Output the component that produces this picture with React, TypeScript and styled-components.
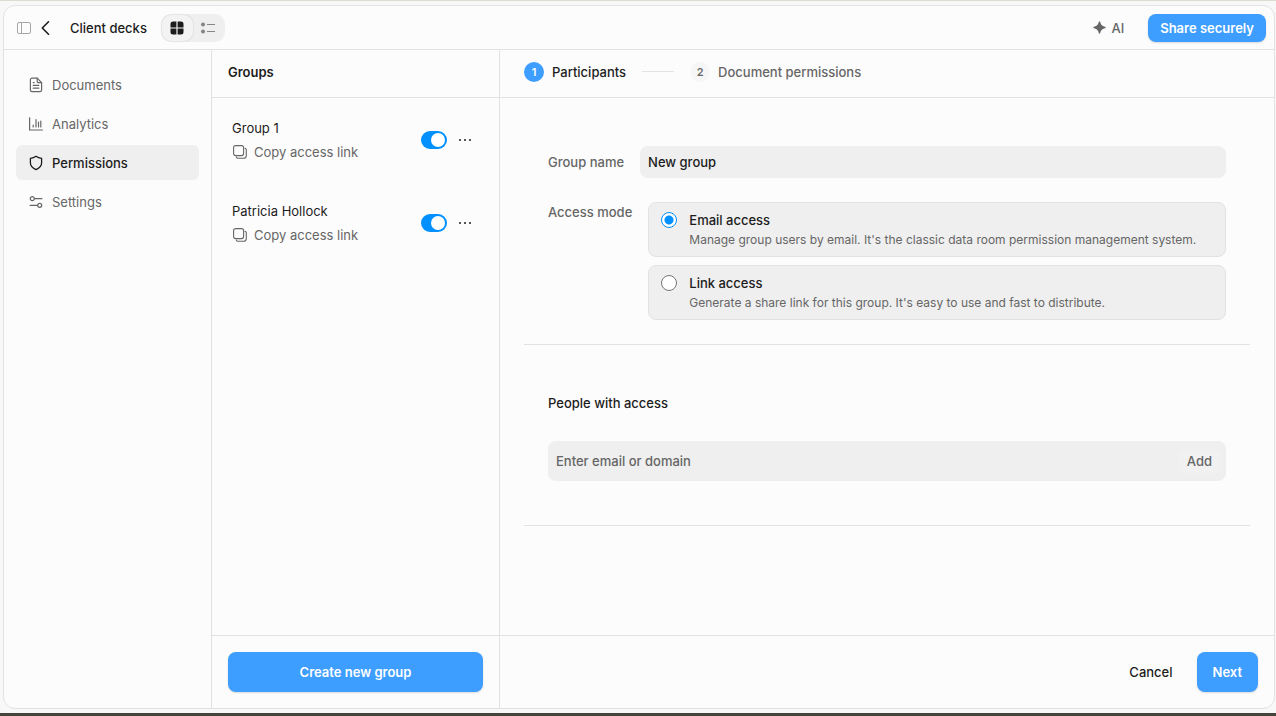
import React from "react";
import styled, { createGlobalStyle } from "styled-components";

const color = {
  text: "#1c1c1c",
  muted: "#666666",
  line: "#e2e2e2",
  surface: "#fcfcfc",
  fill: "#efefef",
  primary: "#3d9eff",
  accent: "#0090ff",
};

const GlobalStyle = createGlobalStyle`
  *, *::before, *::after { box-sizing: border-box; }
  body {
    margin: 0;
    background: #f8f8f8;
    color: ${color.text};
    font-family: Inter, "Liberation Sans", sans-serif;
    font-size: 13px;
    line-height: 20px;
    -webkit-font-smoothing: antialiased;
  }
  button, input { font: inherit; color: inherit; }
  button { border: 0; padding: 0; background: none; cursor: pointer; }
  h1, h2, p, ul, ol { margin: 0; padding: 0; font: inherit; list-style: none; }
  svg { display: block; flex: none; }
`;

const Screen = styled.div`
  min-height: 100vh;
  display: flex;
  padding: 4px 1px 4px 3px;
  border-top: 1px solid #dcdcd4;
  border-bottom: 3px solid #45443a;
`;

const Window = styled.div`
  flex: 1;
  display: flex;
  flex-direction: column;
  min-width: 0;
  background: ${color.surface};
  border: 1px solid ${color.line};
  border-radius: 12px;
  overflow: hidden;
`;

const TopBar = styled.header`
  display: flex;
  align-items: center;
  height: 44px;
  padding: 0 8px 0 12px;
  border-bottom: 1px solid ${color.line};
`;

const IconButton = styled.button<{ $tone?: string }>`
  display: flex;
  align-items: center;
  justify-content: center;
  height: 20px;
  color: ${(p) => p.$tone ?? color.text};
`;

const BackButton = styled(IconButton)`
  margin-left: 8px;
`;

const Title = styled.h1`
  margin-left: 20px;
  font-weight: 500;
`;

const ViewSwitch = styled.div`
  display: flex;
  align-items: center;
  margin-left: 14px;
  padding: 1px;
  border-radius: 10px;
  background: ${color.fill};
`;

const ViewButton = styled.button<{ $active?: boolean }>`
  display: flex;
  align-items: center;
  justify-content: center;
  width: 31px;
  height: 26px;
  border-radius: 9px;
  color: ${(p) => (p.$active ? color.text : "#858585")};
  background: ${(p) => (p.$active ? "#f3f3f3" : "transparent")};
  box-shadow: ${(p) => (p.$active ? "0 0 2px rgba(0, 0, 0, 0.16)" : "none")};
`;

const AiButton = styled.button`
  display: flex;
  align-items: center;
  gap: 5px;
  margin-left: auto;
  margin-right: 24px;
  font-weight: 500;
  color: ${color.muted};
`;

const PrimaryButton = styled.button<{ $compact?: boolean; $wide?: boolean }>`
  height: ${(p) => (p.$compact ? 28 : 40)}px;
  width: ${(p) => (p.$wide ? "100%" : "auto")};
  padding: 0 ${(p) => (p.$compact ? 12 : 16)}px;
  border-radius: 8px;
  background: ${color.primary};
  box-shadow: 0 1px 2px rgba(0, 0, 0, 0.14);
  color: #fff;
  font-weight: 600;
`;

const Columns = styled.div`
  flex: 1;
  display: grid;
  grid-template-columns: 208px 288px minmax(0, 1fr);
`;

const Sidebar = styled.nav`
  display: flex;
  flex-direction: column;
  gap: 4px;
  padding: 17px 12px;
  border-right: 1px solid ${color.line};
`;

const NavLink = styled.a<{ $active?: boolean }>`
  display: flex;
  align-items: center;
  gap: 8px;
  height: 35px;
  padding: 0 12px;
  border-radius: 6px;
  font-weight: ${(p) => (p.$active ? 500 : 400)};
  text-decoration: none;
  color: ${(p) => (p.$active ? color.text : color.muted)};
  background: ${(p) => (p.$active ? color.fill : "transparent")};
`;

const Panel = styled.section<{ $divided?: boolean }>`
  display: flex;
  flex-direction: column;
  min-width: 0;
  border-right: ${(p) => (p.$divided ? `1px solid ${color.line}` : "0")};
`;

const PanelHeader = styled.div<{ $inset: number }>`
  display: flex;
  align-items: center;
  height: 48px;
  padding: 0 ${(p) => p.$inset}px 4px;
  border-bottom: 1px solid ${color.line};
`;

const PanelTitle = styled.h2`
  font-weight: 600;
`;

const PanelFooter = styled.div`
  display: flex;
  align-items: center;
  justify-content: flex-end;
  gap: 24px;
  height: 73px;
  padding: 0 16px;
  border-top: 1px solid ${color.line};
`;

const GroupList = styled.ul`
  flex: 1;
  display: flex;
  flex-direction: column;
  gap: 39px;
  padding: 20px;
`;

const GroupRow = styled.li`
  display: flex;
  align-items: center;
  height: 44px;
  padding-right: 7px;
`;

const GroupInfo = styled.div`
  flex: 1;
  display: flex;
  flex-direction: column;
  align-items: flex-start;
  gap: 4px;
`;

const CopyButton = styled.button`
  display: flex;
  align-items: center;
  gap: 6px;
  color: ${color.muted};
`;

const Toggle = styled.input`
  appearance: none;
  display: flex;
  align-items: center;
  justify-content: flex-start;
  width: 26px;
  height: 18px;
  margin: 0 11px 0 0;
  padding: 2px;
  border-radius: 9px;
  background: #c8c8c8;
  cursor: pointer;
  &::before {
    content: "";
    width: 14px;
    height: 14px;
    border-radius: 50%;
    background: #fff;
  }
  &:checked {
    justify-content: flex-end;
    background: ${color.accent};
  }
`;

const Steps = styled.ol`
  display: flex;
  align-items: center;
  gap: 16px;
`;

const Step = styled.li<{ $current?: boolean }>`
  display: flex;
  align-items: center;
  gap: 8px;
  font-weight: 500;
  color: ${(p) => (p.$current ? color.text : color.muted)};
`;

const StepNumber = styled.span<{ $current?: boolean }>`
  width: 20px;
  border-radius: 50%;
  text-align: center;
  font-size: 11px;
  font-weight: 600;
  color: ${(p) => (p.$current ? "#fff" : color.muted)};
  background: ${(p) => (p.$current ? color.primary : "#f6f6f6")};
`;

const StepLine = styled.li`
  width: 32px;
  height: 1px;
  background: ${color.line};
`;

const FormBody = styled.div`
  flex: 1;
  padding: 0 24px;
`;

const FormSection = styled.div<{ $bottom: number }>`
  display: flex;
  flex-direction: column;
  padding: 48px 24px ${(p) => p.$bottom}px;
  border-bottom: 1px solid ${color.line};
`;

const FieldRow = styled.div`
  display: flex;
  align-items: center;
  gap: 16px;
  margin-bottom: 24px;
`;

const FieldLabel = styled.label`
  font-weight: 500;
  color: ${color.muted};
`;

const TextField = styled.input`
  flex: 1;
  min-width: 0;
  height: 32px;
  padding: 0 8px;
  border: 0;
  border-radius: 8px;
  background: ${color.fill};
  font-weight: 500;
  outline: none;
`;

const ModeRow = styled.div`
  display: flex;
  align-items: flex-start;
  gap: 16px;
`;

const ModeOptions = styled.div`
  flex: 1;
  display: flex;
  flex-direction: column;
  gap: 8px;
`;

const OptionCard = styled.label`
  display: flex;
  gap: 12px;
  height: 55px;
  padding: 7px 12px;
  border: 1px solid ${color.line};
  border-radius: 8px;
  background: ${color.fill};
  cursor: pointer;
`;

const Radio = styled.input`
  appearance: none;
  flex: none;
  width: 16px;
  height: 16px;
  margin: 2px 0;
  border: 1px solid #767676;
  border-radius: 50%;
  background: #fff;
  &:checked {
    border-color: ${color.accent};
    background: radial-gradient(circle, ${color.accent} 4px, #fff 5px);
  }
`;

const OptionText = styled.span`
  display: flex;
  flex-direction: column;
`;

const OptionTitle = styled.span`
  font-weight: 500;
`;

const OptionHint = styled.span`
  font-size: 12px;
  color: ${color.muted};
`;

const SectionTitle = styled.h2`
  margin-bottom: 28px;
  font-weight: 500;
`;

const InviteField = styled.div`
  display: flex;
  align-items: center;
  height: 40px;
  padding: 0 6px 0 8px;
  border-radius: 8px;
  background: ${color.fill};
`;

const InviteInput = styled.input`
  flex: 1;
  min-width: 0;
  padding: 0;
  border: 0;
  background: none;
  font-weight: 500;
  outline: none;
  &::placeholder { color: ${color.muted}; opacity: 1; }
`;

const AddButton = styled.button`
  height: 24px;
  padding: 0 8px;
  border-radius: 6px;
  background: #f1f1f1;
  font-weight: 500;
  color: ${color.muted};
`;

const CancelButton = styled.button`
  font-weight: 500;
`;

const stroke = {
  fill: "none",
  stroke: "currentColor",
  strokeLinecap: "round" as const,
  strokeLinejoin: "round" as const,
};

const PanelIcon = () => (
  <svg width="16" height="16" viewBox="0 0 16 16" {...stroke}>
    <rect x="1.5" y="2.5" width="13" height="11" rx="1.5" />
    <path d="M5.5 2.5v11" />
  </svg>
);

const BackIcon = () => (
  <svg width="10" height="16" viewBox="0 0 10 16" {...stroke} strokeWidth="1.6">
    <path d="M8.500 1.800 2.300 8l6.200 6.200" />
  </svg>
);

const GridIcon = () => (
  <svg width="14" height="14" viewBox="0 0 14 14" fill="currentColor">
    <path d="M3 .5h3.400v5.900H.5V3A2.500 2.500 0 0 1 3 .5ZM7.600.5H11A2.500 2.500 0 0 1 13.500 3v3.400H7.600ZM.5 7.600h5.900v5.900H3A2.500 2.500 0 0 1 .5 11ZM7.600 7.600h5.900V11a2.500 2.500 0 0 1-2.500 2.500H7.600Z" />
  </svg>
);

const ListIcon = () => (
  <svg width="16" height="14" viewBox="0 0 16 14" fill="currentColor">
    <circle cx="3" cy="3.5" r="2" />
    <circle cx="3" cy="10.5" r="2" />
    <path d="M7 3h8v1H7zM7 10h8v1H7z" />
  </svg>
);

const SparkIcon = () => (
  <svg width="13" height="13" viewBox="0 0 13 13" fill="currentColor">
    <path d="M6.5.3c.4 0 .5.3.7.8.7 2.6 1.600 3.700 4.700 4.700.5.2.8.3.8.7s-.3.5-.8.7c-3.100 1-4 2.100-4.700 4.700-.2.500-.3.800-.7.800s-.5-.3-.7-.8C5.100 9.300 4.200 8.200 1.100 7.200.6 7 .3 6.900.3 6.500s.3-.5.8-.7c3.100-1 4-2.100 4.700-4.700.2-.5.3-.8.7-.8Z" />
  </svg>
);

const DocumentIcon = () => (
  <svg width="16" height="16" viewBox="0 0 16 16" {...stroke} strokeWidth="1.2">
    <path d="M4 1.200h5.200L13.600 5.600V13a1.600 1.600 0 0 1-1.600 1.600H4A1.600 1.600 0 0 1 2.400 13V2.800A1.600 1.600 0 0 1 4 1.200Z" />
    <path d="M9.200 1.200V4.600a1 1 0 0 0 1 1h3.400M5.200 5.600h1M5.200 8.400h5.600M5.200 11.200h5.600" />
  </svg>
);

const ChartIcon = () => (
  <svg width="16" height="16" viewBox="0 0 16 16" {...stroke} strokeWidth="1.2">
    <path d="M1.600 1.800v12.200h12.800M5.200 11V9M8 11V3.500M10.500 11V6M12.800 11V5" />
  </svg>
);

const ShieldIcon = () => (
  <svg width="16" height="16" viewBox="0 0 16 16" {...stroke} strokeWidth="1.3">
    <path d="M8 1.300c1.600 1.200 3.300 1.800 5.600 2v4.800c0 3.200-1.900 4.900-5.600 6.600-3.700-1.700-5.600-3.400-5.600-6.600V3.300c2.300-.2 4-.8 5.600-2Z" />
  </svg>
);

const SettingsIcon = () => (
  <svg width="16" height="16" viewBox="0 0 16 16" {...stroke} strokeWidth="1.2">
    <circle cx="4.300" cy="4.700" r="2" />
    <circle cx="11.700" cy="11.300" r="2" />
    <path d="M6.500 4.700h7.400M2.100 11.300h7.400" />
  </svg>
);

const CopyIcon = () => (
  <svg width="16" height="16" viewBox="0 0 16 16" {...stroke} strokeWidth="1.1">
    <rect x="1.600" y="1.600" width="10" height="10" rx="2" />
    <path d="M13 4.300c.8.300 1.300.9 1.300 1.700v5.500a2.800 2.800 0 0 1-2.800 2.800H6c-.8 0-1.400-.5-1.700-1.300" />
  </svg>
);

const DotsIcon = () => (
  <svg width="14" height="4" viewBox="0 0 14 4" fill="currentColor">
    <circle cx="2" cy="2" r="1" />
    <circle cx="7" cy="2" r="1" />
    <circle cx="12" cy="2" r="1" />
  </svg>
);

const navItems = [
  { label: "Documents", Icon: DocumentIcon },
  { label: "Analytics", Icon: ChartIcon },
  { label: "Permissions", Icon: ShieldIcon, active: true },
  { label: "Settings", Icon: SettingsIcon },
];

const groups = ["Group 1", "Patricia Hollock"];

const accessModes = [
  {
    id: "email",
    title: "Email access",
    hint: "Manage group users by email. It's the classic data room permission management system.",
  },
  {
    id: "link",
    title: "Link access",
    hint: "Generate a share link for this group. It's easy to use and fast to distribute.",
  },
];

export default function App() {
  return (
    <>
      <GlobalStyle />
      <Screen>
        <Window>
          <TopBar>
            <IconButton aria-label="Toggle sidebar" $tone="#a6a6a6">
              <PanelIcon />
            </IconButton>
            <BackButton aria-label="Back">
              <BackIcon />
            </BackButton>
            <Title>Client decks</Title>
            <ViewSwitch>
              <ViewButton aria-label="Grid view" $active>
                <GridIcon />
              </ViewButton>
              <ViewButton aria-label="List view">
                <ListIcon />
              </ViewButton>
            </ViewSwitch>
            <AiButton>
              <SparkIcon />
              AI
            </AiButton>
            <PrimaryButton $compact>Share securely</PrimaryButton>
          </TopBar>

          <Columns>
            <Sidebar>
              {navItems.map(({ label, Icon, active }) => (
                <NavLink key={label} href="#" $active={active}>
                  <Icon />
                  {label}
                </NavLink>
              ))}
            </Sidebar>

            <Panel $divided>
              <PanelHeader $inset={16}>
                <PanelTitle>Groups</PanelTitle>
              </PanelHeader>
              <GroupList>
                {groups.map((name) => (
                  <GroupRow key={name}>
                    <GroupInfo>
                      <span>{name}</span>
                      <CopyButton>
                        <CopyIcon />
                        Copy access link
                      </CopyButton>
                    </GroupInfo>
                    <Toggle type="checkbox" role="switch" aria-label={name} defaultChecked />
                    <IconButton aria-label="More">
                      <DotsIcon />
                    </IconButton>
                  </GroupRow>
                ))}
              </GroupList>
              <PanelFooter>
                <PrimaryButton $wide>Create new group</PrimaryButton>
              </PanelFooter>
            </Panel>

            <Panel>
              <PanelHeader $inset={24}>
                <Steps>
                  <Step $current>
                    <StepNumber $current>1</StepNumber>
                    Participants
                  </Step>
                  <StepLine aria-hidden />
                  <Step>
                    <StepNumber>2</StepNumber>
                    Document permissions
                  </Step>
                </Steps>
              </PanelHeader>
              <FormBody>
                <FormSection $bottom={24}>
                  <FieldRow>
                    <FieldLabel htmlFor="group-name">Group name</FieldLabel>
                    <TextField id="group-name" defaultValue="New group" />
                  </FieldRow>
                  <ModeRow role="radiogroup" aria-labelledby="access-mode">
                    <FieldLabel as="span" id="access-mode">
                      Access mode
                    </FieldLabel>
                    <ModeOptions>
                      {accessModes.map((mode) => (
                        <OptionCard key={mode.id}>
                          <Radio
                            type="radio"
                            name="access-mode"
                            value={mode.id}
                            defaultChecked={mode.id === "email"}
                          />
                          <OptionText>
                            <OptionTitle>{mode.title}</OptionTitle>
                            <OptionHint>{mode.hint}</OptionHint>
                          </OptionText>
                        </OptionCard>
                      ))}
                    </ModeOptions>
                  </ModeRow>
                </FormSection>
                <FormSection $bottom={44}>
                  <SectionTitle>People with access</SectionTitle>
                  <InviteField>
                    <InviteInput aria-label="Email or domain" placeholder="Enter email or domain" />
                    <AddButton>Add</AddButton>
                  </InviteField>
                </FormSection>
              </FormBody>
              <PanelFooter>
                <CancelButton>Cancel</CancelButton>
                <PrimaryButton>Next</PrimaryButton>
              </PanelFooter>
            </Panel>
          </Columns>
        </Window>
      </Screen>
    </>
  );
}
